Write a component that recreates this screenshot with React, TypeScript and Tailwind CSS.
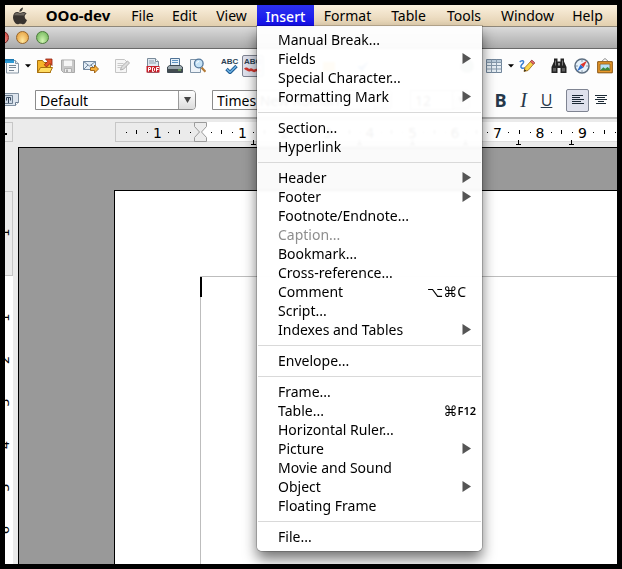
import type { ReactNode } from "react";

type MenuEntry = {
  label: string;
  submenu?: boolean;
  disabled?: boolean;
  keys?: string;
  fn?: string;
};

const menuGroups: MenuEntry[][] = [
  [
    { label: "Manual Break..." },
    { label: "Fields", submenu: true },
    { label: "Special Character..." },
    { label: "Formatting Mark", submenu: true },
  ],
  [{ label: "Section..." }, { label: "Hyperlink" }],
  [
    { label: "Header", submenu: true },
    { label: "Footer", submenu: true },
    { label: "Footnote/Endnote..." },
    { label: "Caption...", disabled: true },
    { label: "Bookmark..." },
    { label: "Cross-reference..." },
    { label: "Comment", keys: "⌥⌘C" },
    { label: "Script..." },
    { label: "Indexes and Tables", submenu: true },
  ],
  [{ label: "Envelope..." }],
  [
    { label: "Frame..." },
    { label: "Table...", keys: "⌘", fn: "F12" },
    { label: "Horizontal Ruler..." },
    { label: "Picture", submenu: true },
    { label: "Movie and Sound" },
    { label: "Object", submenu: true },
    { label: "Floating Frame" },
  ],
  [{ label: "File..." }],
];

function InsertMenu() {
  return (
    <div
      role="menu"
      aria-label="Insert"
      className="absolute left-0 top-full z-10 w-[225px] rounded-b-[5px] bg-white/95 pt-1 pb-[5px] shadow-[0_0_0_1px_rgba(0,0,0,0.18),0_8px_14px_rgba(0,0,0,0.55)] backdrop-blur-[1px]"
    >
      {menuGroups.map((group, i) => (
        <div key={i} role="group">
          {i > 0 && (
            <div role="separator" className="flex h-3 items-center px-px">
              <div className="h-px w-full bg-[#d9d9d9]" />
            </div>
          )}
          {group.map((entry) => (
            <button
              key={entry.label}
              type="button"
              role="menuitem"
              disabled={entry.disabled}
              className="flex h-[19px] w-full items-center pl-[21px] text-left text-black disabled:text-[#8e8e8e]"
            >
              <span className="flex-1">{entry.label}</span>
              {entry.submenu && (
                <svg viewBox="0 0 9 11" className="mr-[11px] h-[11px] w-[9px]" aria-hidden="true">
                  <path d="M0.5 0 9 5.500 0.5 11z" fill="#555" />
                </svg>
              )}
              {entry.keys && (
                <span className={entry.fn ? "mr-1.5 flex items-center" : "mr-4 flex items-center"}>
                  <span>{entry.keys}</span>
                  {entry.fn && <span className="text-[11px] font-semibold">{entry.fn}</span>}
                </span>
              )}
            </button>
          ))}
        </div>
      ))}
    </div>
  );
}

function MenuTitle({ children, className = "" }: { children: ReactNode; className?: string }) {
  return (
    <button type="button" className={`h-full text-center whitespace-nowrap ${className}`}>
      {children}
    </button>
  );
}

function MenuBar() {
  return (
    <nav className="flex h-[22px] shrink-0 border-b border-[#8f8779] bg-linear-to-b from-[#fbf0de] to-[#e2cfae]">
      <button type="button" aria-label="Apple" className="flex h-full w-[29px] items-center justify-center">
        <svg viewBox="0 0 16 18" className="h-[18px] w-4" aria-hidden="true">
          <path
            d="M10.9 0.6c.1 1.4-.4 2.4-1.1 3.2-.7.7-1.5 1.1-2.4 1-.1-1.200.4-2.200 1.100-2.900.7-.8 1.600-1.200 2.400-1.300z"
            fill="#3f3a35"
          />
          <path
            d="M11.200 4.900c1.400 0 2.700.7 3.400 1.700-1.300.8-2 1.900-1.900 3.200.1 1.500.9 2.600 2.300 3.200-.7 2.200-2.300 4.300-3.800 4.300-1 0-1.600-.6-2.800-.6s-1.900.6-2.800.6C3.600 17.300 1 13.800 1 10.300 1 6.900 3.100 5 5.200 5c1.200 0 2.200.8 3 .8.700 0 1.700-.9 3-.9z"
            fill="#38332f"
          />
          <path d="M2 8.300C2.600 6.500 4 5.600 5.400 5.700c1 .1 1.900.8 2.800.8 1 0 2-.9 3.200-.8.9 0 1.600.4 2.200.9-.9.5-1.500 1.100-1.700 1.900z" fill="#6d675f" />
        </svg>
      </button>
      <MenuTitle className="w-[88px] text-[15px] font-bold">OOo-dev</MenuTitle>
      <MenuTitle className="w-[41px]">File</MenuTitle>
      <MenuTitle className="w-[43px]">Edit</MenuTitle>
      <MenuTitle className="w-[51px]">View</MenuTitle>
      <div className="relative">
        <button
          type="button"
          aria-haspopup="menu"
          aria-expanded="true"
          className="h-[22px] w-[57px] bg-linear-to-b from-[#2c30f0] to-[#1206ea] text-center font-medium text-white"
        >
          Insert
        </button>
        <InsertMenu />
      </div>
      <MenuTitle className="w-[67px]">Format</MenuTitle>
      <MenuTitle className="w-[55px]">Table</MenuTitle>
      <MenuTitle className="w-[56px]">Tools</MenuTitle>
      <MenuTitle className="w-[71px]">Window</MenuTitle>
      <MenuTitle className="w-[49px]">Help</MenuTitle>
    </nav>
  );
}

function TitleBar() {
  return (
    <div className="-ml-[9px] flex h-[22px] shrink-0 items-center gap-[7px] border-b border-[#696969] bg-linear-to-b from-[#dadada] to-[#ababab]">
      <button type="button" aria-label="Close" className="size-[13px] rounded-full border border-[#7a2a26] bg-radial-[at_50%_85%] from-[#ffb3a8] to-[#c5332c]" />
      <button type="button" aria-label="Minimize" className="size-[13px] rounded-full border border-[#96652a] bg-radial-[at_50%_80%] from-[#ffe9a0] to-[#e2932f]" />
      <button type="button" aria-label="Zoom" className="size-[13px] rounded-full border border-[#4c7a3c] bg-radial-[at_50%_80%] from-[#d3f5b4] to-[#62ad4c]" />
    </div>
  );
}

function Icon({ children }: { children: ReactNode }) {
  return (
    <svg viewBox="0 0 16 16" className="size-4 shrink-0" aria-hidden="true">
      {children}
    </svg>
  );
}

function Tool({ label, className = "", children }: { label: string; className?: string; children: ReactNode }) {
  return (
    <button type="button" aria-label={label} className={`flex shrink-0 items-center justify-center ${className}`}>
      {children}
    </button>
  );
}

function DropArrow() {
  return (
    <svg viewBox="0 0 6 4" className="h-1 w-1.5" aria-hidden="true">
      <path d="M0 0.300h6L3 3.600z" fill="#000" />
    </svg>
  );
}

function StandardBar() {
  return (
    <div className="-ml-0.5 flex h-[34px] shrink-0 items-center">
      <Tool label="New" className="w-4">
        <Icon>
          <path d="M3.500 2.500h9l3 3v9.500h-12z" fill="#f7f9fb" stroke="#8796a4" />
          <path d="M12.500 2.500v3h3" fill="#dde5ec" stroke="#8796a4" />
          <path d="M0 1h11v4H0z" fill="#2e9bd6" />
          <path d="M0 1h11v1.500H0z" fill="#1f78b0" />
          <path d="M6 7.500h7M6 9.500h7M6 12.500h5" stroke="#788694" />
        </Icon>
      </Tool>
      <Tool label="New options" className="w-[18px]"><DropArrow /></Tool>
      <Tool label="Open" className="w-4">
        <Icon>
          <path d="M.5 14.500v-12h5l1.500 2h6.500v10z" fill="#f5b52a" stroke="#a8700f" />
          <path d="M.5 14.500 3.500 9.500H15.500l-2.500 5z" fill="#ffdc62" stroke="#a8700f" />
          <path d="M8.500 1H15v6.500l-2-2L9.500 9 7.300 6.800l3.400-3.500z" fill="#e5552a" stroke="#8e1f0c" strokeWidth=".8" />
        </Icon>
      </Tool>
      <Tool label="Save" className="ml-[7px] w-4">
        <Icon>
          <path d="M1.500 2h13v12.500h-11l-2-2z" fill="#c9c9c9" stroke="#a9a9a9" />
          <path d="M4 2.500h8v5.500H4z" fill="#f6f6f6" />
          <path d="M4.500 10.500h7v4h-7z" fill="#eee" stroke="#b0b0b0" />
          <path d="M6 11.500h2v3H6z" fill="#b0b0b0" />
        </Icon>
      </Tool>
      <Tool label="E-mail" className="ml-[7px] w-4">
        <Icon>
          <path d="M.5 3.500h12v8H.5z" fill="#e3edf6" stroke="#7489a0" />
          <path d="m.5 3.500 6 4.500 6-4.500M.5 11.500 5 7M12.500 11.500 8 7" fill="none" stroke="#7489a0" />
          <path d="M7.500 9.500h4v-2.500l4 4-4 4v-2.500h-4z" fill="#f8b13a" stroke="#9a5d10" strokeWidth=".9" />
        </Icon>
      </Tool>
      <Tool label="Edit File" className="ml-[15px] w-4">
        <Icon>
          <path d="M1.500 1.500h9l2 2v11h-11z" fill="#f6f6f6" stroke="#c4c4c4" />
          <path d="M3.500 5.500h6M3.500 7.500h5M3.500 9.500h3" stroke="#c9c9c9" />
          <path d="m6.500 12 .8-3L13.500 3l2 2-6 6.200z" fill="#ddd" stroke="#a9a9a9" strokeWidth=".9" />
        </Icon>
      </Tool>
      <Tool label="Export as PDF" className="ml-[15px] w-4">
        <Icon>
          <path d="M2.500.5h8l3 3v11h-11z" fill="#dfe9f1" stroke="#7a8b9a" />
          <path d="M10.500.5v3h3" fill="#fff" stroke="#7a8b9a" />
          <path d="M4 3h5M4 5h7" stroke="#8f9fae" />
          <path d="M1.500 8h13v6.500h-13z" fill="#c8202b" />
          <path d="M3.500 13.500v-4h2v2h-2M7.500 9.500h1l1 1v2l-1 1h-1zM11.500 13.500v-4H14M11.500 11.500h2" fill="none" stroke="#fff" />
        </Icon>
      </Tool>
      <Tool label="Print" className="ml-1.5 w-4">
        <Icon>
          <path d="M3.500.5h9v8h-9z" fill="#e6f1fa" stroke="#4f7396" />
          <path d="M5 2.500h6M5 4.500h6" stroke="#5f94c2" />
          <path d="M.5 9 2.500 7.500h11L15.500 9v5.500H.5z" fill="#9aa6ad" stroke="#3e4a52" />
          <path d="M1 11h14v3H1z" fill="#424b50" />
          <path d="M11 12h3" stroke="#7ed05a" />
        </Icon>
      </Tool>
      <Tool label="Page Preview" className="ml-[7px] w-4">
        <Icon>
          <path d="M.5 1.500h8l2 2v11H.5z" fill="#eef3f8" stroke="#8195a8" />
          <path d="m11.500 9.500 4 4.300" stroke="#b47a35" strokeWidth="2.200" />
          <circle cx="8.800" cy="5.500" r="4.300" fill="#c5e2f6" stroke="#54789c" strokeWidth="1.300" />
          <path d="M6.500 5.500a2.500 2.500 0 0 1 2.500-2" stroke="#fff" fill="none" />
        </Icon>
      </Tool>
      <Tool label="Spelling" className="ml-[15px] w-[18px]">
        <SpellIcon>
          <path d="m5.500 11 3.500 3.500 6.500-6.500" fill="none" stroke="#1f5c94" strokeWidth="3.400" />
          <path d="m5.800 11.200 3.200 3 6.200-6" fill="none" stroke="#6fb4e6" strokeWidth="1.400" />
        </SpellIcon>
      </Tool>
      <Tool label="AutoSpellcheck" className="ml-[3px] h-[22px] w-[22px] rounded-[2px] border border-[#7f8492] bg-[#dfe1ec]">
        <SpellIcon>
          <path d="M1 11.500c2-2.500 3 2 5 .5s3 2 5 .5 3 1 5-.5" fill="none" stroke="#d0352d" strokeWidth="2.600" />
        </SpellIcon>
      </Tool>
      <Tool label="Cut" className="ml-[57px] w-4">
        <Icon><path d="M2 4h12v9H2z" fill="#f1c34c" /></Icon>
      </Tool>
      <Tool label="Paste" className="ml-[18px] w-4">
        <Icon><path d="m2 8 5 6L14 3 7 8z" fill="#4e86c9" /></Icon>
      </Tool>
      <Tool label="Hyperlink" className="ml-[88px] w-4">
        <Icon><circle cx="8" cy="8" r="7" fill="#8aa79a" /></Icon>
      </Tool>
      <Tool label="Table" className="ml-[11px] w-4">
        <Icon>
          <path d="M.5 1.500h15v13H.5z" fill="#e6eef4" stroke="#71859a" />
          <path d="M1 2h14v2.500H1z" fill="#b9cbda" />
          <path d="M.5 4.500h15M.5 7.500h15M.5 11h15M5.500 1.500v13M10.500 1.500v13" stroke="#8598aa" />
        </Icon>
      </Tool>
      <Tool label="Table options" className="w-[17px]"><DropArrow /></Tool>
      <Tool label="Show Draw Functions" className="w-4">
        <Icon>
          <path d="M.7 4c2-2.200 5-1.500 3.500 1-1.500 2-3.500 3.500-1.500 5 2 1 2-1 4 .5" fill="none" stroke="#3a7fd0" strokeWidth="1.500" />
          <path d="m5 13.500 1-4L12.500 2.500 15.500 5 9 12.500z" fill="#f9d548" stroke="#99661b" strokeWidth=".8" />
          <path d="m11.300 3.700 1.500-1.700 3 2.700-1.500 1.600z" fill="#e46a6a" stroke="#8f3540" strokeWidth=".7" />
          <path d="m5 13.500.6-2.300 1.700 1.500z" fill="#222" />
        </Icon>
      </Tool>
      <Tool label="Find and Replace" className="ml-4 w-4">
        <Icon>
          <path d="M3 .5h3.500v3h3v-3H13v3l2.500 5.500v6H9.500v-5h-3v5H.5v-6L3 3.500z" fill="#242424" />
          <path d="M2 10h3v3.500H2zM11 10h3v3.500h-3z" fill="#5c5c5c" />
          <path d="M4.500 2.500v5M11.500 2.500v5" stroke="#777" />
          <path d="M7 5h2v2.500H7z" fill="#999" />
        </Icon>
      </Tool>
      <Tool label="Navigator" className="ml-[7px] w-4">
        <Icon>
          <circle cx="8" cy="8" r="7" fill="#e6f1fa" stroke="#5d6e80" strokeWidth="1.500" />
          <path d="M8 2.200v1.500M8 12.300v1.500M2.200 8h1.500M12.300 8h1.500" stroke="#6d7f90" />
          <path d="M13 2.800 9.500 9.500 6.500 6.500z" fill="#e0362c" />
          <path d="m3 13.200 3.500-6.700 3 3z" fill="#2b6dd0" />
        </Icon>
      </Tool>
      <Tool label="Gallery" className="ml-[7px] w-4">
        <Icon>
          <path d="M4.500 3.500 8 .5l3.500 3" fill="none" stroke="#8d8d8d" />
          <path d="M.7 3.700h14.600v11.100H.7z" fill="#e99a2c" stroke="#87500c" />
          <path d="M3 6h10v6.500H3z" fill="#b5e1f7" stroke="#8a5511" strokeWidth=".8" />
          <path d="m3.300 12.200 3-3 2 1.500L10.500 9l2.300 1.800v1.400z" fill="#3d8a3a" />
        </Icon>
      </Tool>
    </div>
  );
}

function SpellIcon({ children }: { children: ReactNode }) {
  return (
    <svg viewBox="0 0 18 16" className="h-4 w-[18px] shrink-0" aria-hidden="true">
      {children}
      <text x="0" y="6" fontSize="8" fontWeight="700" fill="#2c4154" fontFamily="Liberation Sans, sans-serif">
        ABC
      </text>
    </svg>
  );
}

function Combo({ label, value, className }: { label: string; value: string; className: string }) {
  return (
    <div className={`relative h-5 shrink-0 ${className}`}>
      <select
        aria-label={label}
        className="h-full w-full appearance-none rounded-r-[4px] border border-[#8b8b8b] bg-white pl-1 text-black"
      >
        <option>{value}</option>
      </select>
      <span className="pointer-events-none absolute inset-y-px right-px flex w-[17px] items-center justify-center rounded-r-[3px] border-l border-[#9b9b9b] bg-linear-to-b from-white to-[#dcdcdc]">
        <svg viewBox="0 0 7 6" className="h-1.5 w-[7px]" aria-hidden="true">
          <path d="M0 0h7L3.500 6z" fill="#444" />
        </svg>
      </span>
    </div>
  );
}

function FormattingBar() {
  return (
    <div className="-ml-0.5 flex h-9 shrink-0 items-center border-b-2 border-[#b4b4b4]">
      <Tool label="Styles and Formatting" className="w-4">
        <Icon>
          <path d="M-3.500 1.500h19v9l-3 3h-16z" fill="#dde5ee" stroke="#8090a0" />
          <path d="M15.500 10.500h-3v3" fill="#fff" stroke="#6b7d90" />
          <path d="M1 3.500h8.500v8H1z" fill="#cfdae6" stroke="#6b7d90" />
          <path d="M5.500 5v6M3.500 8.500v-3h4v3" fill="none" stroke="#33445a" />
        </Icon>
      </Tool>
      <Combo label="Paragraph style" value="Default" className="ml-4 w-[161px]" />
      <Combo label="Font name" value="Times New Roman" className="ml-4 w-[180px]" />
      <Combo label="Font size" value="12" className="ml-[18px] w-[60px]" />
      <div className="ml-[19px] flex items-center text-[#26384a]">
        <Tool label="Bold" className="w-[23px] font-['Open_Sans',sans-serif] text-lg leading-5 font-bold">B</Tool>
        <Tool label="Italic" className="w-[23px] font-['Liberation_Serif',serif] text-xl leading-5 italic">I</Tool>
        <Tool label="Underline" className="w-[23px] font-['Open_Sans',sans-serif] text-base leading-5 underline">U</Tool>
      </div>
      <Tool label="Align Left" className="ml-2 size-[23px] rounded-[2px] border border-[#7f8492] bg-[#dfe1ec]">
        <Icon>
          <path d="M2 3.500h11M2 5.500h8M2 7.500h12M2 9.500h9M2 11.500h12" stroke="#1d2a36" />
        </Icon>
      </Tool>
      <Tool label="Centered" className="size-[23px]">
        <Icon>
          <path d="M2 3.500h12M4 5.500h8M2 7.500h12M5 9.500h6M3 11.500h10" stroke="#1d2a36" />
        </Icon>
      </Tool>
    </div>
  );
}

const inch = 42.5;

function HorizontalRuler() {
  const units = [1, 2, 3, 4, 5, 6, 7, 8, 9];
  return (
    <div className="flex h-7 shrink-0 bg-[#ebebeb] pt-[3px]">
      <button type="button" aria-label="Tab type" className="h-5 w-2 shrink-0 border-y border-r border-[#c6c6c6] pt-1">
        <span className="block h-0.5 w-0.5 bg-black" />
      </button>
      <div className="ml-[102px] h-5 w-[85px] shrink-0 border border-[#c6c6c6]" />
      <div className="relative h-5 flex-1 border-b border-[#dedede] bg-white">
        <svg
          width="502"
          height="25"
          className="absolute -left-[85px] top-0 overflow-visible font-['DejaVu_Sans',sans-serif] text-[14px]"
          aria-label="Ruler"
        >
          {[-1, ...units].map((n) => {
            const x = 85 + n * inch;
            return <text key={n} x={x} y="16" textAnchor="middle">{Math.abs(n)}</text>;
          })}
          {[-2, -1, 0, ...units].map((n) => {
            const x = 85 + n * inch;
            return (
              <g key={n} shapeRendering="crispEdges">
                <path d={`M${x + 10.5} 10h1M${x + 32} 10h1`} stroke="#000" />
                <path d={`M${x + 21.5} 8v4`} stroke="#000" />
              </g>
            );
          })}
          {[1, 2, 3, 4, 5, 6, 7].map((n) => (
            <path key={n} d={`M${85.5 + n * 53} 18v4m-2.500 0.500h5`} stroke="#000" fill="none" shapeRendering="crispEdges" />
          ))}
          <path d="M79.500 .5h12v4l-5 5.500 5 5.500v4h-12v-4l5-5.500-5-5.500z" fill="#ececec" stroke="#9b9b9b" />
        </svg>
      </div>
    </div>
  );
}

function VerticalRuler() {
  return (
    <div className="relative flex w-[13px] shrink-0 flex-col overflow-hidden bg-[#ebebeb] pt-[44px] pr-[5px]">
      <div className="h-[85px] shrink-0 border-y border-r border-[#c6c6c6]" />
      <div className="flex-1 bg-white" />
      <svg width="13" height="430" className="absolute left-0 top-0 font-['DejaVu_Sans',sans-serif] text-[13px]" aria-label="Vertical ruler">
        {[-1, 1, 2, 3, 4, 5, 6].map((n) => (
          <text key={n} transform={`translate(4 ${128 + n * inch}) rotate(-90)`} textAnchor="middle">
            {Math.abs(n)}
          </text>
        ))}
      </svg>
    </div>
  );
}

export default function App() {
  return (
    <div className="flex h-screen flex-col bg-black p-[5px] font-['Noto_Sans','DejaVu_Sans',sans-serif] text-[14px] leading-[19px] text-black">
      <MenuBar />
      <div className="flex min-h-0 flex-1 flex-col overflow-hidden bg-[#fdfdfd]">
        <TitleBar />
        <StandardBar />
        <FormattingBar />
        <HorizontalRuler />
        <div className="flex min-h-0 flex-1">
          <VerticalRuler />
          <main className="flex min-w-0 flex-1 border-t border-l border-black bg-[#999] pt-[42px] pl-[95px]">
            <article className="flex min-w-0 flex-1 border-t border-l border-black bg-white pt-[85px] pl-[85px]">
              <div className="flex-1 border-t border-l border-[#bdbdbd]">
                <div className="-ml-px h-5 w-0.5 bg-black" />
              </div>
            </article>
          </main>
        </div>
      </div>
    </div>
  );
}
